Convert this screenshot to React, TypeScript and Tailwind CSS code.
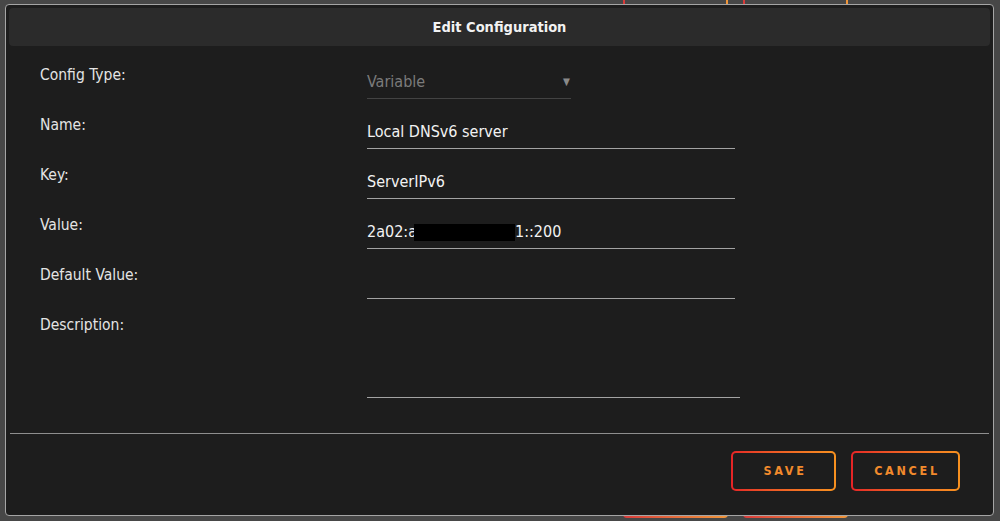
import React from "react";

const font = "font-['DejaVu_Sans_Condensed','DejaVu_Sans',sans-serif] font-stretch-condensed";

function Label({ children }: { children: React.ReactNode }) {
  return <div className="w-[327px] shrink-0 pt-[10px] text-[15.5px] leading-5 text-[#e4e4e4]">{children}</div>;
}

function Field({ children }: { children?: React.ReactNode }) {
  return (
    <div className="w-[368px] border-b border-[#a3a3a3] pt-[17px] pb-[6px] h-[44px] text-[16px] leading-5 text-[#f2f2f2] whitespace-nowrap">
      {children}
    </div>
  );
}

function Row({ label, children, tall }: { label: string; children: React.ReactNode; tall?: boolean }) {
  return (
    <div className={`flex items-start ${tall ? "h-[93px]" : "h-[50px]"}`}>
      <Label>{label}</Label>
      {children}
    </div>
  );
}

function GradButton({ label, w }: { label: string; w: string }) {
  return (
    <div className={`${w} h-[40px] rounded-[5px] bg-linear-to-r from-[#e52326] to-[#f7911f] p-[2px]`}>
      <div className="flex h-full w-full items-center justify-center rounded-[3px] bg-[#1d1d1d] text-[12.5px] font-bold tracking-[2.7px] text-[#f28a2c] pl-[3px]">
        {label}
      </div>
    </div>
  );
}

export default function App() {
  return (
    <div className={`relative h-[521px] w-[1000px] overflow-hidden bg-[#474747] ${font}`}>
      {/* buttons of the page behind the modal */}
      <div className="absolute left-[623px] top-[-20px] flex gap-[15px]">
        <div className="h-[538px] w-[105px] rounded-[4px] bg-linear-to-r from-[#d93a3a] to-[#f0963a] p-[2px]">
          <div className="h-full w-full rounded-[3px] bg-[#474747]" />
        </div>
        <div className="h-[538px] w-[105px] rounded-[4px] bg-linear-to-r from-[#d93a3a] to-[#f0963a] p-[2px]">
          <div className="h-full w-full rounded-[3px] bg-[#474747]" />
        </div>
      </div>

      <div className="absolute left-[5px] top-[4px] flex h-[512px] w-[989px] flex-col rounded-[4px] border border-[#a5a5a5] bg-[#1d1d1d] p-[3px]">
        <div className="flex h-[38px] shrink-0 items-center justify-center rounded-[4px] bg-[#2b2b2b] pt-[2px] text-[14.5px] font-bold text-[#f2f2f2]">
          Edit Configuration
        </div>

        <div className="flex flex-col pl-[31px] pt-[9px]">
          <Row label="Config Type:">
            <div className="flex w-[204px] items-center justify-between border-b border-[#434343] pt-[17px] pb-[6px] h-[44px] text-[16px] leading-5 text-[#7b7b7b]">
              <span>Variable</span>
              <span className="pr-[1px] text-[10px] text-[#8a8a8a]">▼</span>
            </div>
          </Row>
          <Row label="Name:">
            <Field>Local DNSv6 server</Field>
          </Row>
          <Row label="Key:">
            <Field>ServerIPv6</Field>
          </Row>
          <Row label="Value:">
            <Field>
              <span className="inline-flex items-center">
                2a02:a
                <span className="ml-[-3px] inline-block h-[17px] w-[101px] bg-black" />
                1::200
              </span>
            </Field>
          </Row>
          <Row label="Default Value:">
            <Field />
          </Row>
          <Row label="Description:" tall>
            <div className="h-[93px] w-[373px] border-b border-[#a3a3a3]" />
          </Row>
        </div>

        <div className="mx-[1px] mt-[35px] h-px bg-[#8e8e8e]" />

        <div className="flex justify-end gap-[15px] pr-[30px] pt-[17px]">
          <GradButton label="SAVE" w="w-[105px]" />
          <GradButton label="CANCEL" w="w-[109px]" />
        </div>
      </div>
    </div>
  );
}
